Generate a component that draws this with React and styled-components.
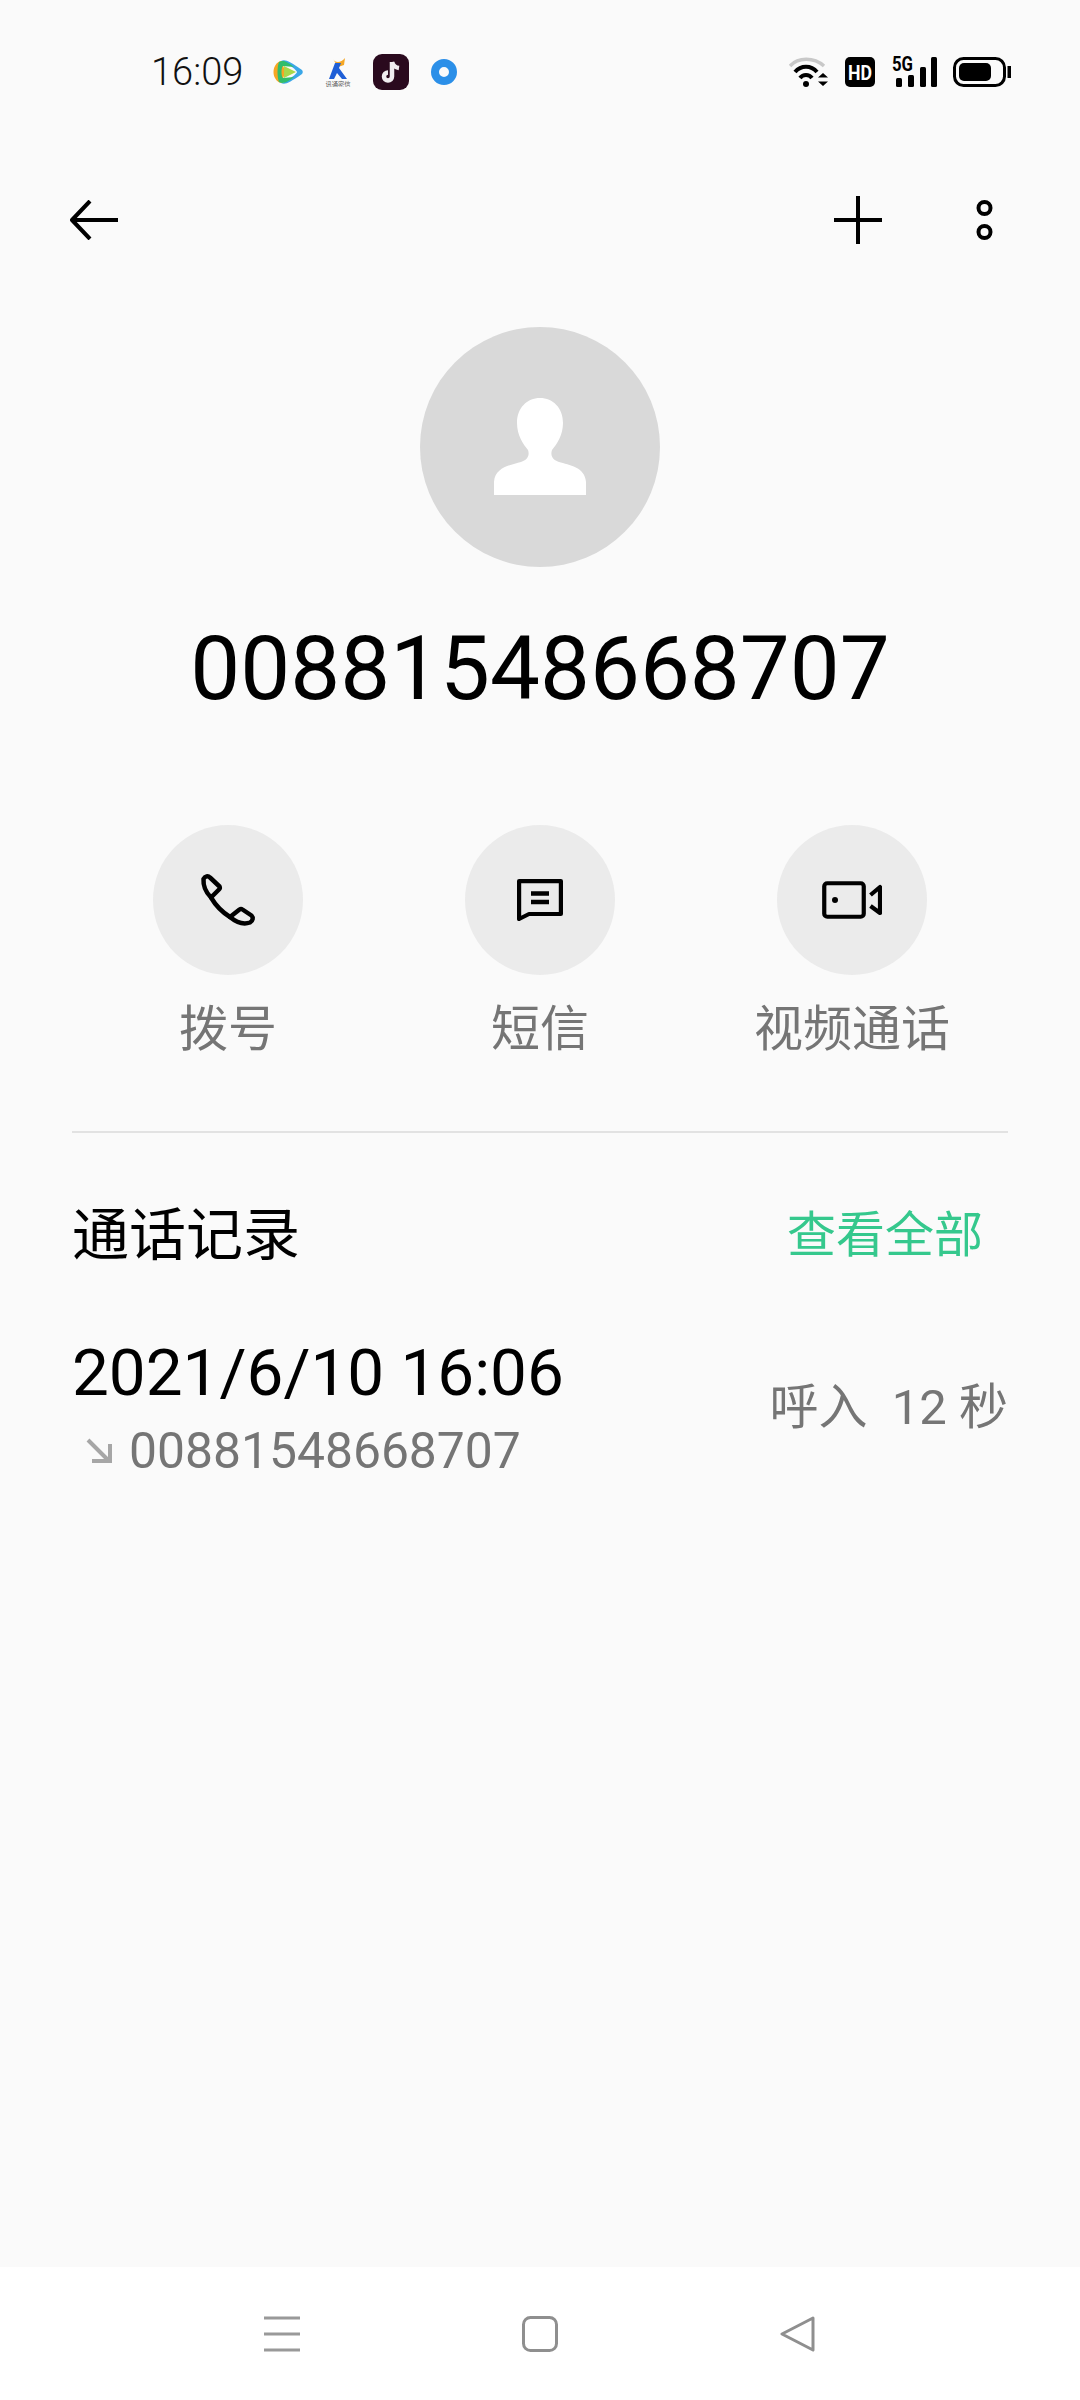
import React from "react";
import styled, { createGlobalStyle } from "styled-components";

const GlobalStyle = createGlobalStyle`
  html, body {
    margin: 0;
    padding: 0;
    background: #fafafa;
  }
  body {
    font-family: Roboto, "Noto Sans CJK SC", sans-serif;
  }
`;

const Page = styled.div`
  width: 1080px;
  height: 2400px;
  display: flex;
  flex-direction: column;
  background: #fafafa;
  overflow: hidden;
`;

const StatusBar = styled.div`
  height: 144px;
  flex-shrink: 0;
  display: flex;
  align-items: center;
  justify-content: space-between;
  padding: 0 69px 0 151px;
`;

const StatusGroup = styled.div`
  display: flex;
  align-items: center;
  gap: ${(p) => p.$gap || 0}px;
`;

const Clock = styled.span`
  font-size: 38px;
  font-weight: 300;
  color: #111;
  width: 122px;
`;

const TopBar = styled.div`
  height: 152px;
  flex-shrink: 0;
  display: flex;
  align-items: center;
  justify-content: space-between;
  padding: 0 87px 0 70px;
`;

const TopActions = styled.div`
  display: flex;
  align-items: center;
  gap: 94px;
`;

const Profile = styled.div`
  display: flex;
  flex-direction: column;
  align-items: center;
  padding-top: 31px;
`;

const Avatar = styled.div`
  width: 240px;
  height: 240px;
  border-radius: 50%;
  background: #d9d9d9;
  display: flex;
  align-items: center;
  justify-content: center;
`;

const PhoneNumber = styled.div`
  margin-top: 50px;
  font-size: 88.9px;
  line-height: 104px;
  color: #000;
`;

const Actions = styled.div`
  margin-top: 104px;
  display: grid;
  grid-template-columns: repeat(3, 312px);
  justify-content: center;
`;

const Action = styled.div`
  display: flex;
  flex-direction: column;
  align-items: center;
  gap: 21px;
`;

const ActionCircle = styled.div`
  width: 150px;
  height: 150px;
  border-radius: 50%;
  background: #ebebeb;
  display: flex;
  align-items: center;
  justify-content: center;
`;

const ActionLabel = styled.div`
  font-size: 49px;
  line-height: 68px;
  color: #757575;
  white-space: nowrap;
`;

const Divider = styled.div`
  margin: 67px 72px 0;
  height: 2px;
  background: #e2e2e2;
`;

const SectionHeader = styled.div`
  margin-top: 63px;
  padding: 0 97px 0 72px;
  display: flex;
  align-items: center;
  justify-content: space-between;
`;

const SectionTitle = styled.div`
  font-size: 57px;
  line-height: 80px;
  color: #000;
`;

const SeeAll = styled.div`
  font-size: 49px;
  line-height: 80px;
  color: #35c88d;
`;

const CallRow = styled.div`
  margin-top: 59px;
  padding: 0 72px;
  display: flex;
  align-items: center;
  justify-content: space-between;
`;

const CallInfo = styled.div`
  display: flex;
  flex-direction: column;
`;

const CallTime = styled.div`
  font-size: 65.6px;
  line-height: 76px;
  color: #000;
`;

const CallNumber = styled.div`
  margin-top: 11px;
  display: flex;
  align-items: center;
  gap: 17px;
  padding-left: 14px;
  font-size: 49.8px;
  line-height: 58px;
  color: #757575;
`;

const CallMeta = styled.div`
  font-size: 49px;
  line-height: 60px;
  color: #757575;
  white-space: pre;
`;

const Spacer = styled.div`
  flex: 1;
`;

const NavBar = styled.div`
  height: 133px;
  flex-shrink: 0;
  background: #fff;
  display: grid;
  grid-template-columns: repeat(3, 36px);
  justify-content: center;
  column-gap: 222px;
  align-items: center;
`;

const VideoLogo = () => (
  <svg width="30" height="26" viewBox="0 0 30 26">
    <path d="M2 7C0 10 0 16 2 19C4 23 7 24 9 24L12 13L9 2C7 2 4 3 2 7Z" fill="#f6a623" />
    <path d="M8 2C12 0 16 2 29 11C30 12 30 14 29 15C16 24 12 26 8 24C12 24 24 15 24 13C24 11 12 2 8 2Z" fill="#3aa7e8" />
    <path d="M6 3C10 1 13 2 21 8L10 7C8 8 8 18 10 19L21 18C13 24 10 25 6 23C4 18 4 8 6 3Z" fill="#31bd6b" />
    <path d="M11 7L23 13L11 19Z" fill="#a8d94a" />
  </svg>
);

const PersonLogo = () => (
  <svg width="26" height="30" viewBox="0 0 26 30">
    <path d="M8 2C10 6 16 6 20 1L19 8L13 10Z" fill="#f5a623" />
    <path d="M10 6H16L14 11L22 22H17L12 16L9 22H4Z" fill="#1f5fd6" />
    <text x="13" y="29.500" fontSize="6.300" textAnchor="middle" fill="#555" fontFamily="Noto Sans CJK SC">讯通密信</text>
  </svg>
);

const TikTokLogo = () => (
  <svg width="36" height="36" viewBox="0 0 36 36">
    <rect width="36" height="36" rx="9" fill="#2a0a1e" />
    <path d="M19 8V22.500A4 4 0 1 1 15 18.500" fill="none" stroke="#f0edf0" strokeWidth="4.500" />
    <path d="M19 8C20 11.500 22.500 13.500 26 14" fill="none" stroke="#f0edf0" strokeWidth="4.500" />
  </svg>
);

const BlueRing = () => (
  <svg width="26" height="26" viewBox="0 0 26 26">
    <circle cx="13" cy="13" r="9" fill="none" stroke="#2b8fe8" strokeWidth="8" />
  </svg>
);

const WifiIcon = () => (
  <svg width="40" height="30" viewBox="0 0 40 30">
    <path d="M1 9C9 0 25 0 35 9" fill="none" stroke="#c8c8c8" strokeWidth="3.500" />
    <path d="M6 15C12 8 22 8 28 15" fill="none" stroke="#000" strokeWidth="4" />
    <path d="M11 21C14 17 20 17 23 21" fill="none" stroke="#000" strokeWidth="4" />
    <circle cx="17" cy="27" r="3" fill="#000" />
    <path d="M34 16L39 20.500H29ZM34 29L39 24.500H29Z" fill="#000" />
  </svg>
);

const HdIcon = () => (
  <svg width="30" height="30" viewBox="0 0 30 30">
    <rect width="30" height="30" rx="5" fill="#000" />
    <text x="15" y="22.500" fontSize="21" fontWeight="700" textAnchor="middle" fill="#fff" fontFamily="Roboto" textLength="24" lengthAdjust="spacingAndGlyphs">HD</text>
  </svg>
);

const SignalIcon = () => (
  <svg width="46" height="30" viewBox="0 0 46 30" overflow="visible">
    <text x="1" y="14" fontSize="20" fontWeight="700" fill="#000" fontFamily="Roboto" textLength="21" lengthAdjust="spacingAndGlyphs">5G</text>
    <rect x="5" y="21" width="6" height="9" rx="1.500" fill="#000" />
    <rect x="17" y="18" width="6" height="12" rx="1.500" fill="#000" />
    <rect x="29" y="10" width="6" height="20" rx="1.500" fill="#000" />
    <rect x="40" y="0" width="6" height="30" rx="1.500" fill="#000" />
  </svg>
);

const BatteryIcon = () => (
  <svg width="58" height="30" viewBox="0 0 58 30">
    <rect x="1.500" y="1.500" width="50" height="27" rx="9" fill="none" stroke="#000" strokeWidth="3" />
    <rect x="6" y="6" width="32" height="18" rx="5" fill="#000" />
    <path d="M54.500 9H58V21H54.500Z" fill="#000" />
  </svg>
);

const BackIcon = () => (
  <svg width="48" height="40" viewBox="0 0 48 40">
    <path d="M20 1L2 20L20 39" fill="none" stroke="#000" strokeWidth="4" strokeLinejoin="round" />
    <path d="M2 20H48" stroke="#000" strokeWidth="4" />
  </svg>
);

const PlusIcon = () => (
  <svg width="48" height="48" viewBox="0 0 48 48">
    <path d="M24 0V48M0 24H48" stroke="#000" strokeWidth="4" />
  </svg>
);

const MoreIcon = () => (
  <svg width="17" height="40" viewBox="0 0 17 40">
    <circle cx="8.500" cy="8" r="6" fill="none" stroke="#000" strokeWidth="4" />
    <circle cx="8.500" cy="32" r="6" fill="none" stroke="#000" strokeWidth="4" />
  </svg>
);

const PersonIcon = () => (
  <svg width="94" height="98" viewBox="0 0 94 98">
    <path
      d="M47 0C34 0 24 10 24 25C24 37 30 46 35 52C37 58 34 62 28 64C18 67 2 69 1 84V97H93V84C92 69 76 67 66 64C60 62 57 58 59 52C64 46 70 37 70 25C70 10 60 0 47 0Z"
      fill="#fff"
    />
  </svg>
);

const PhoneIcon = () => (
  <svg width="75" height="70" viewBox="0 0 75 70" fill="none" stroke="#000" strokeWidth="4.500" strokeLinejoin="round" strokeLinecap="round">
    <path d="M12.500 14C14 11 17 10.500 19 12.500L28.500 21.500C29 22.500 29 23.500 28 24.500L20 32.500C15.500 28 12 22 12.500 14Z" />
    <path d="M20 32.500C25 41 31 47 39 52" />
    <path d="M39 52L48.500 44.500C49.500 43.800 50.500 43.800 51.500 44.500L60.500 50.500C62.500 52.500 62 56 59 57.500C52 60 45 57 39 52Z" />
  </svg>
);

const MessageIcon = () => (
  <svg width="46" height="42" viewBox="0 0 46 42" fill="none" stroke="#000" strokeWidth="4.200">
    <path d="M2.100 2.100H43.900V35H12L2.100 40Z" strokeLinejoin="round" />
    <path d="M14 14.500H32M14 23H32" strokeWidth="4.500" />
  </svg>
);

const VideoIcon = () => (
  <svg width="60" height="40" viewBox="0 0 60 40" fill="none" stroke="#000" strokeWidth="4.200" strokeLinejoin="round">
    <rect x="2.250" y="3.250" width="39.500" height="33.500" rx="3" />
    <circle cx="13" cy="20" r="3" fill="#000" stroke="none" />
    <path d="M48.500 15L58 7V33L48.500 26" />
  </svg>
);

const IncomingIcon = () => (
  <svg width="26" height="26" viewBox="0 0 26 26" fill="none" stroke="#a6a6a6" strokeWidth="4">
    <path d="M2 2L23 23M24 6V23H6" />
  </svg>
);

const MenuIcon = () => (
  <svg width="36" height="36" viewBox="0 0 36 36" stroke="#999" strokeWidth="3">
    <path d="M0 2H36M0 18H36M0 34H36" />
  </svg>
);

const HomeIcon = () => (
  <svg width="36" height="36" viewBox="0 0 36 36" fill="none" stroke="#8f8f8f" strokeWidth="3">
    <rect x="1.500" y="1.500" width="33" height="33" rx="7" />
  </svg>
);

const TriangleIcon = () => (
  <svg width="36" height="36" viewBox="0 0 36 36" fill="none" stroke="#8f8f8f" strokeWidth="3" strokeLinejoin="round">
    <path d="M33 2L2 18L33 34Z" />
  </svg>
);

const actions = [
  { label: "拨号", icon: <PhoneIcon /> },
  { label: "短信", icon: <MessageIcon /> },
  { label: "视频通话", icon: <VideoIcon /> },
];

export default function App() {
  return (
    <Page>
      <GlobalStyle />
      <StatusBar>
        <StatusGroup>
          <Clock>16:09</Clock>
          <StatusGroup $gap={22}>
            <VideoLogo />
            <PersonLogo />
            <TikTokLogo />
            <BlueRing />
          </StatusGroup>
        </StatusGroup>
        <StatusGroup $gap={16}>
          <WifiIcon />
          <HdIcon />
          <SignalIcon />
          <BatteryIcon />
        </StatusGroup>
      </StatusBar>
      <TopBar>
        <BackIcon />
        <TopActions>
          <PlusIcon />
          <MoreIcon />
        </TopActions>
      </TopBar>
      <Profile>
        <Avatar>
          <PersonIcon />
        </Avatar>
        <PhoneNumber>00881548668707</PhoneNumber>
      </Profile>
      <Actions>
        {actions.map((a) => (
          <Action key={a.label}>
            <ActionCircle>{a.icon}</ActionCircle>
            <ActionLabel>{a.label}</ActionLabel>
          </Action>
        ))}
      </Actions>
      <Divider />
      <SectionHeader>
        <SectionTitle>通话记录</SectionTitle>
        <SeeAll>查看全部</SeeAll>
      </SectionHeader>
      <CallRow>
        <CallInfo>
          <CallTime>2021/6/10 16:06</CallTime>
          <CallNumber>
            <IncomingIcon />
            00881548668707
          </CallNumber>
        </CallInfo>
        <CallMeta>呼入  12 秒</CallMeta>
      </CallRow>
      <Spacer />
      <NavBar>
        <MenuIcon />
        <HomeIcon />
        <TriangleIcon />
      </NavBar>
    </Page>
  );
}
